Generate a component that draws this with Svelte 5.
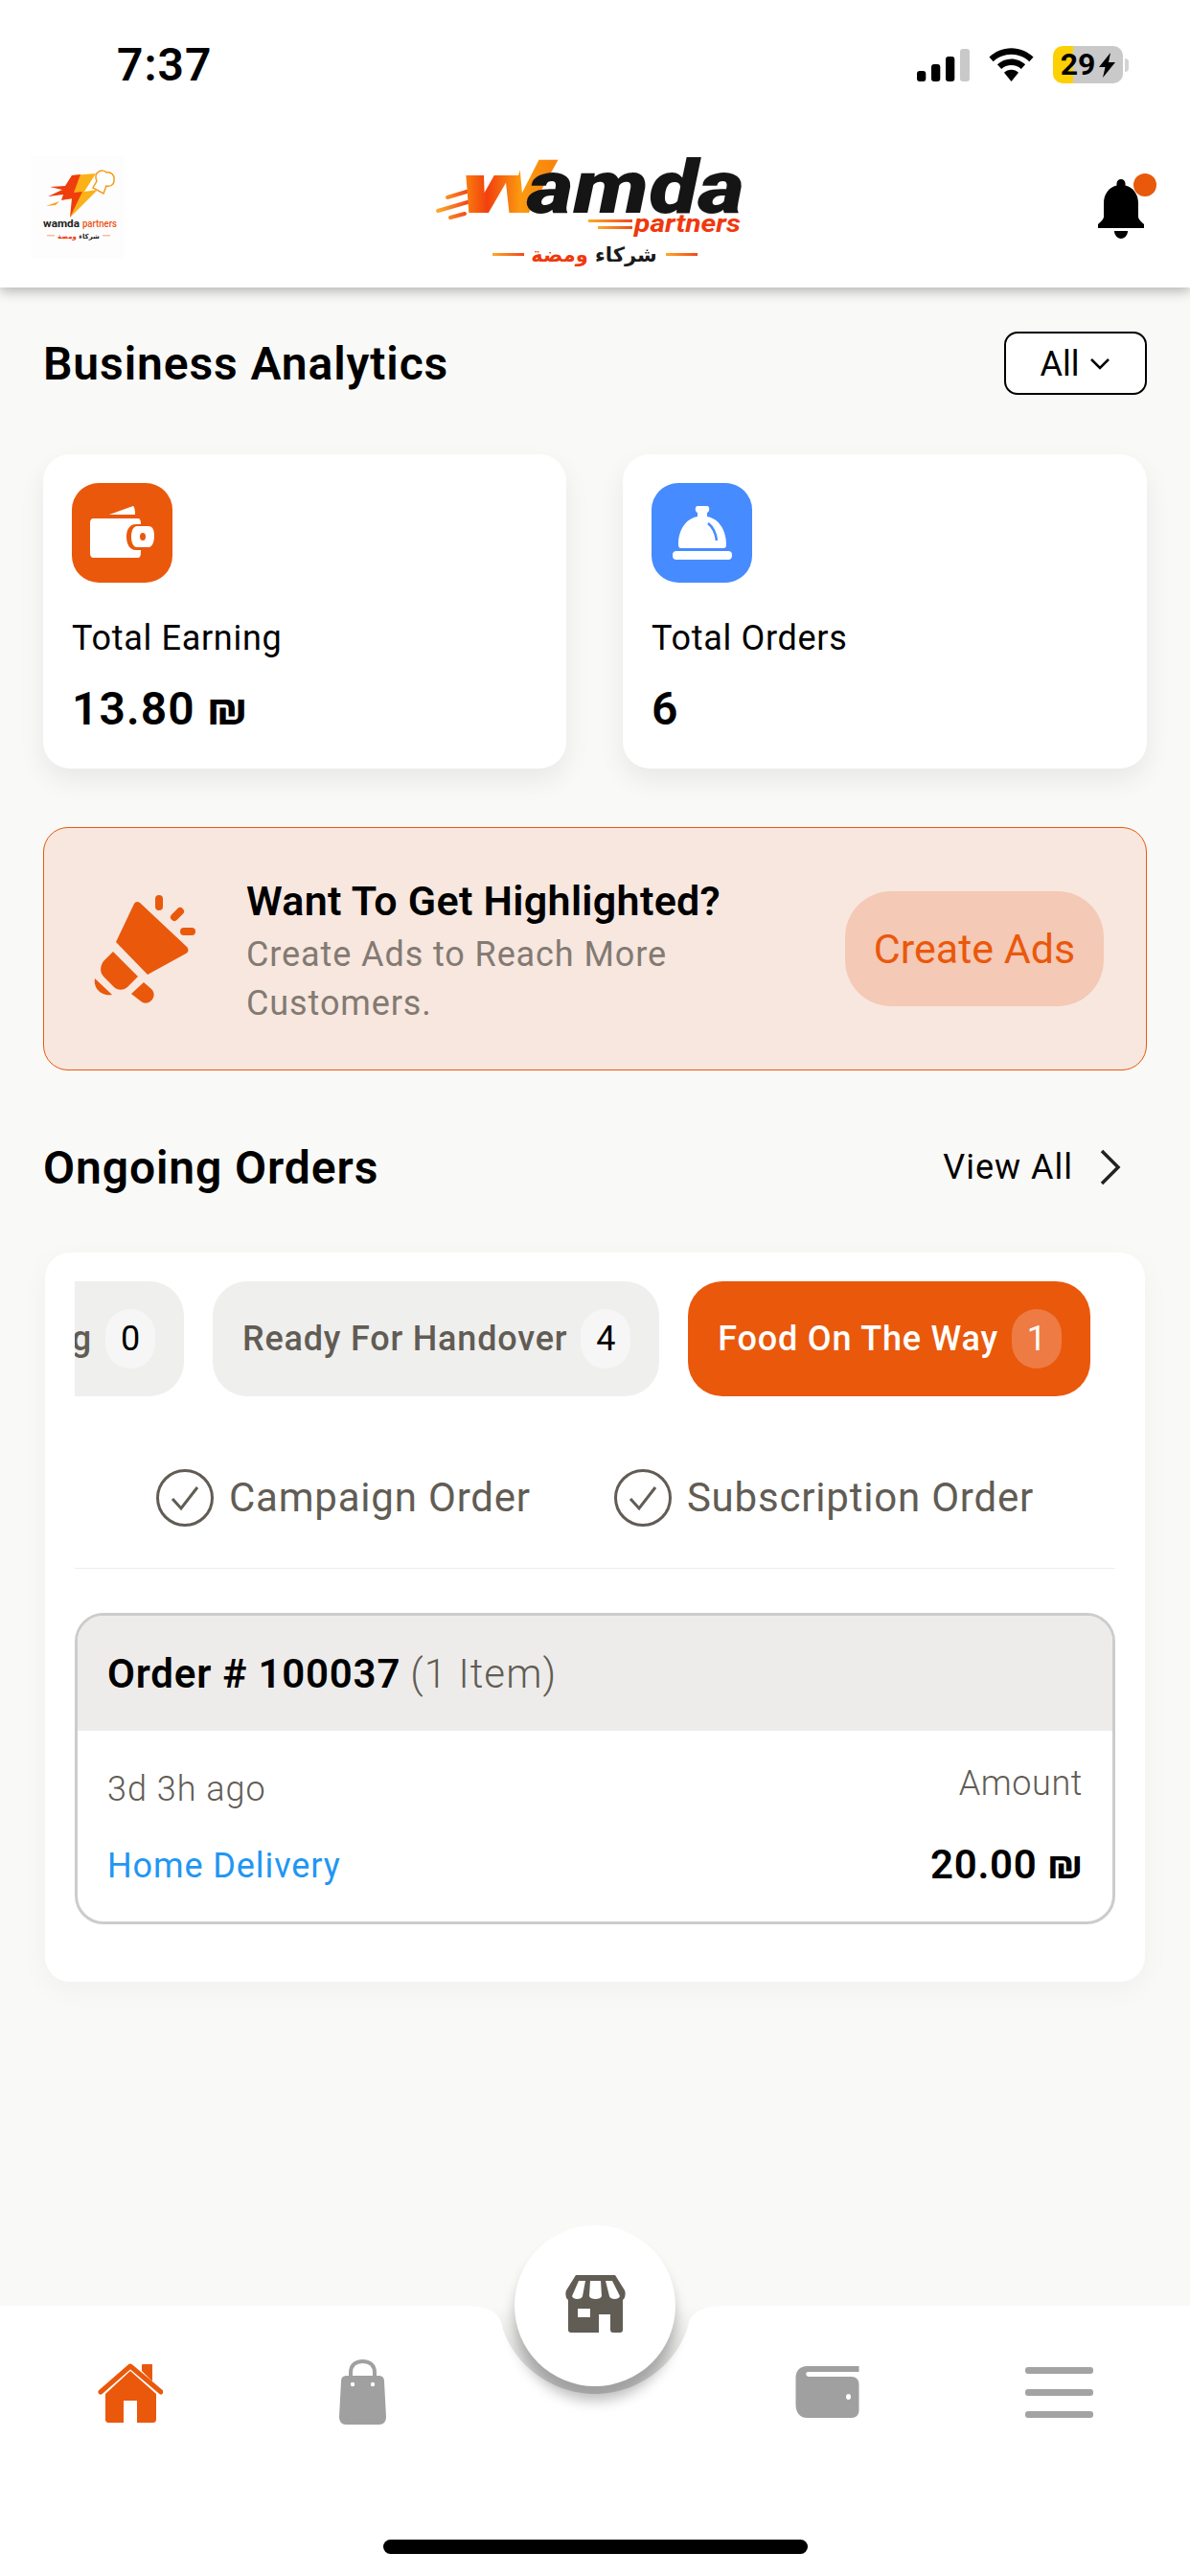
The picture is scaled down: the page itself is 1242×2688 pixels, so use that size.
<script lang="ts">
  const tabs = [
    { label: "Ready For Handover", n: 4, active: false },
    { label: "Food On The Way", n: 1, active: true },
  ];
  const flags = ["Campaign Order", "Subscription Order"];
</script>

{#snippet check()}
  <svg class="check" viewBox="0 0 60 60" aria-hidden="true">
    <circle cx="30" cy="30" r="28.5" fill="none" stroke="#615c54" stroke-width="3" />
    <path d="M17 31l9 10 17-22" fill="none" stroke="#615c54" stroke-width="3" />
  </svg>
{/snippet}

<div class="page">
  <div class="top">
    <div class="status">
      <span class="time">7:37</span>
      <div class="status-icons">
        <svg width="55" height="34" viewBox="0 0 55 34" aria-hidden="true">
          <rect x="0" y="23" width="9.300" height="11" rx="3" />
          <rect x="15" y="16" width="9.300" height="18" rx="3" />
          <rect x="30" y="8" width="9.300" height="26" rx="3" />
          <rect x="45" y="0" width="10" height="34" rx="3" fill="#c9c9c9" />
        </svg>
        <svg width="47" height="36" viewBox="0 0 50 38" aria-hidden="true">
          <path d="M25 0C15.500 0 7 3.800 0.500 10L5 15C10.300 10 17.300 7 25 7s14.700 3 20 8l4.500-5C43 3.800 34.500 0 25 0z" />
          <path d="M25 12c-6 0-11.500 2.400-15.500 6.200l4.500 5c2.900-2.700 6.800-4.300 11-4.300s8.100 1.600 11 4.300l4.500-5C36.500 14.400 31 12 25 12z" />
          <path d="M25 24c-3.100 0-5.900 1.200-8 3.200L25 37l8-9.800c-2.100-2-4.900-3.200-8-3.200z" />
        </svg>
        <div class="battery">
          <div class="battery-body">
            <span class="battery-text">29</span>
            <svg width="17" height="26" viewBox="0 0 17 26" aria-hidden="true">
              <path d="M12 0L0 15h6.500L4 26 17 10H10z" />
            </svg>
          </div>
          <div class="battery-cap"></div>
        </div>
      </div>
    </div>

    <header class="header">
      <svg class="mini-logo" width="98" height="107" viewBox="0 0 98 107" aria-hidden="true">
        <defs>
          <linearGradient id="line" x1="0" y1="0" x2="1" y2="0">
            <stop offset="0" stop-color="#fbaa2a" />
            <stop offset="1" stop-color="#f2481a" />
          </linearGradient>
          <linearGradient id="wgrad" x1="0" y1="0" x2="1" y2="0">
            <stop offset="0" stop-color="#fb9a0e" />
            <stop offset="0.3" stop-color="#f2400f" />
            <stop offset="0.62" stop-color="#fb9a10" />
            <stop offset="1" stop-color="#f8810e" />
          </linearGradient>
        </defs>
        <rect width="98" height="107" fill="#fdfdfd" />
        <path d="M70 17c3-3 8-2 9 0 5-1 9 3 8 8 0 5-4 7-8 6l-3 8-11-6 4-7c-2-4-1-8 1-9z" fill="#fff" stroke="#f59a1c" stroke-width="1.500" />
        <path d="M43 20L68 18 56 37 70 35 41 64 48 44 38 45z" fill="#fbb117" />
        <path d="M43 20L52 19 45 38 54 37 41 64 43 44 32 46 34 40 18 42 33 35 20 32 36 31z" fill="#ef3d0c" />
        <path d="M16 52L30 47 26 51z" fill="#f7a21b" />
        <text x="13" y="74" class="mini-a" textLength="38" lengthAdjust="spacingAndGlyphs">wamda</text>
        <text x="54" y="74" class="mini-b" textLength="36" lengthAdjust="spacingAndGlyphs">partners</text>
        <text x="50" y="86" class="mini-ar" text-anchor="middle" direction="rtl"><tspan fill="#222">شركاء</tspan> <tspan fill="#f0380c">ومضة</tspan></text>
        <rect x="17" y="82" width="8" height="1.500" fill="#f9b9a0" />
        <rect x="75" y="82" width="8" height="1.500" fill="#f9b9a0" />
      </svg>

      <svg class="logo" width="340" height="190" viewBox="450 100 340 190" aria-hidden="true">
        <path d="M467 206l20-6M457 220l31-9M470 227l15-4" fill="none" stroke="url(#line)" stroke-width="4" stroke-linecap="round" />
        <text x="476" y="222" class="logo-w" fill="url(#wgrad)" textLength="100" lengthAdjust="spacingAndGlyphs">W</text>
        <path d="M470 150H552L541 183H470z" fill="#fff" />
        <text x="550" y="222" class="logo-main" textLength="227" lengthAdjust="spacingAndGlyphs">amda</text>
        <rect x="614" y="229" width="46" height="3" fill="url(#line)" />
        <rect x="624" y="236" width="36" height="3" fill="url(#line)" />
        <text x="662" y="242" class="logo-sub" textLength="111" lengthAdjust="spacingAndGlyphs">partners</text>
        <text x="620" y="273" class="logo-ar" text-anchor="middle" direction="rtl"><tspan fill="#1a1a1a">شركاء</tspan> <tspan fill="#f0380c">ومضة</tspan></text>
        <rect x="514" y="264" width="33" height="3" fill="url(#line)" />
        <rect x="695" y="264" width="33" height="3" fill="url(#line)" />
      </svg>

      <div class="bell">
        <svg width="50" height="62" viewBox="0 0 50 62" aria-hidden="true">
          <path d="M25 0c2.500 0 4.500 2 4.500 4.500v2C38 8.500 43 16 43 25v14c0 3 3 5 6 8v4H1v-4c3-3 6-5 6-8V25C7 16 12 8.500 20.500 6.500v-2C20.500 2 22.500 0 25 0z" />
          <path d="M18 54h14c0 4-3 8-7 8s-7-4-7-8z" />
        </svg>
        <span class="bell-dot"></span>
      </div>
    </header>
  </div>

  <main class="main">
    <div class="title-row">
      <h2>Business Analytics</h2>
      <button class="filter">
        All
        <svg width="24" height="14" viewBox="0 0 24 14" aria-hidden="true"><path d="M3 2l9 9 9-9" fill="none" stroke="#000" stroke-width="2.500" /></svg>
      </button>
    </div>

    <div class="stats">
      <div class="stat">
        <div class="stat-icon orange">
          <svg width="68" height="56" viewBox="0 0 68 56" aria-hidden="true">
            <path d="M20 9L45 0c1.500 1 2 5 2 9z" fill="#fff" />
            <path d="M4 13h46c2 0 3 2 3 5v1h-5c-7 0-10 6-10 13s3 14 10 14h5v2c0 4-1 6-3 6H4c-3 0-4-2-4-5V18c0-3 1-5 4-5z" fill="#fff" />
            <path d="M49 21h12c4 0 6 4 6 10s-2 12-6 12H49c-4 0-6-5-6-11s2-11 6-11z" fill="#fff" />
            <ellipse cx="55" cy="32" rx="3" ry="4" fill="#ea580c" />
          </svg>
        </div>
        <div class="stat-label">Total Earning</div>
        <div class="stat-value">13.80 ₪</div>
      </div>
      <div class="stat">
        <div class="stat-icon blue">
          <svg width="62" height="56" viewBox="0 0 62 56" aria-hidden="true">
            <path d="M26 0h10c3 0 3 6 0 7v4c12 2 20 14 20 29 0 3-1 4-3 4H9c-2 0-3-1-3-4 0-15 8-27 20-29V7c-3-1-3-7 0-7z" fill="#fff" />
            <path d="M37 18c5 4 8 10 9 18" fill="none" stroke="#468bff" stroke-width="2.500" />
            <rect x="0" y="47" width="62" height="9" rx="4" fill="#fff" />
          </svg>
        </div>
        <div class="stat-label">Total Orders</div>
        <div class="stat-value">6</div>
      </div>
    </div>

    <section class="promo">
      <svg class="promo-icon" width="150" height="170" viewBox="0 5 150 170" aria-hidden="true">
        <path d="M60 43c1-2 4-3 6-1l49 46c2 2 2 6-1 7L74 117 41 83z" fill="#ea580c" />
        <path d="M38 93L64 119 53 130c-3 3-10 4-14 0L29 120c-5-5-5-11-1-17z" fill="#ea580c" />
        <path d="M19 121L37 138C27 140 17 132 19 121zM70 125L78 132c4 4 3 9 0 12-4 4-9 3-12 0L57 137z" fill="#ea580c" />
        <path d="M86 38V46M102 57L108 51M112 72H120" fill="none" stroke="#ea580c" stroke-width="8" stroke-linecap="round" />
      </svg>
      <div class="promo-text">
        <div class="promo-title">Want To Get Highlighted?</div>
        <div class="promo-sub">Create Ads to Reach More Customers.</div>
      </div>
      <button class="promo-btn">Create Ads</button>
    </section>

    <div class="title-row orders-title">
      <h2>Ongoing Orders</h2>
      <div class="view-all">
        View All
        <svg width="24" height="38" viewBox="0 0 24 38" aria-hidden="true"><path d="M4 2l17 17L4 36" fill="none" stroke="#222" stroke-width="3.500" /></svg>
      </div>
    </div>

    <section class="orders">
      <div class="tabs">
        <div class="tab cut"><span class="tab-text">g</span><span class="count">0</span></div>
        {#each tabs as t}
          <div class="tab" class:active={t.active}>
            <span class="tab-text">{t.label}</span><span class="count">{t.n}</span>
          </div>
        {/each}
      </div>

      <div class="flags">
        {#each flags as f}
          <div class="flag">{@render check()}<span>{f}</span></div>
        {/each}
      </div>

      <div class="order">
        <div class="order-head"><b>Order # 100037</b> <span>(1 Item)</span></div>
        <div class="order-body">
          <div class="order-col">
            <span class="ago">3d 3h ago</span>
            <span class="delivery">Home Delivery</span>
          </div>
          <div class="order-col right">
            <span class="amount-label">Amount</span>
            <span class="amount">20.00 ₪</span>
          </div>
        </div>
      </div>
    </section>
  </main>

  <nav class="nav">
    <svg class="notch" width="320" height="110" viewBox="0 0 320 110" aria-hidden="true">
      <defs>
        <linearGradient id="notchfill" x1="0" y1="0" x2="0" y2="1">
          <stop offset="0" stop-color="#f9f9f7" />
          <stop offset="0.5" stop-color="#e6e6e5" />
          <stop offset="1" stop-color="#d4d4d4" />
        </linearGradient>
      </defs>
      <path d="M22 0C45 0 58 5 62 17C70 55 110 92 160 92S250 55 258 17C262 5 275 0 298 0z" fill="url(#notchfill)" />
    </svg>
    <div class="store">
      <svg width="63" height="60" viewBox="0 0 63 60" aria-hidden="true">
        <path d="M11 0H52L62 16c1 2 1 8-2 10V57c0 2-1 3-3 3H50c-2 0-3-1-3-3V41H35V60H6c-2 0-3-1-3-3V26C0 24 0 18 1 16z" fill="#615c54" />
        <path d="M14 6h7l-3 16c-1 4-10 4-11 0zM26 6h11l1 16c-1 4-12 4-13 0zM42 6h7l8 16c-1 4-10 4-11 0z" fill="#fff" />
        <rect x="13" y="35" width="13" height="9" fill="#fff" />
      </svg>
    </div>
    <div class="nav-items">
      <svg width="68" height="64" viewBox="0 0 68 64" aria-hidden="true">
        <path d="M3 32L34 5 66 32" fill="none" stroke="#ea580c" stroke-width="5" stroke-linecap="round" stroke-linejoin="round" />
        <path d="M46 10V4c0-1 1-1 1-1h9c1 0 1 0 1 1v17z" fill="#ea580c" />
        <path d="M34 10L61 34V60c0 3-1 4-4 4H41V41H27V64H12c-3 0-4-1-4-4V34z" fill="#ea580c" />
      </svg>
      <svg width="49" height="68" viewBox="0 0 49 68" aria-hidden="true">
        <path d="M12 19V14C12 6 17 2 24.500 2S37 6 37 14V19" fill="none" stroke="#a0a0a0" stroke-width="4" />
        <path d="M8 17h33c4 0 6 2 6 6l2 37c0 5-3 8-7 8H7c-4 0-7-3-7-8l2-37c0-4 2-6 6-6z" fill="#a0a0a0" />
        <circle cx="14" cy="26" r="2.200" fill="#fff" />
        <circle cx="35" cy="26" r="2.200" fill="#fff" />
      </svg>
      <span></span>
      <svg width="67" height="54" viewBox="0 0 66 54" aria-hidden="true">
        <path d="M12 0h54v6H13c-3 0-3 4 0 5h45c5 0 8 3 8 8v27c0 5-3 8-8 8H12C4 54 0 48 0 40V12C0 5 4 0 12 0z" fill="#a0a0a0" />
        <ellipse cx="55" cy="32" rx="2.500" ry="3" fill="#fff" />
      </svg>
      <div class="burger"><span></span><span></span><span></span></div>
    </div>
    <div class="home-bar"></div>
  </nav>
</div>

<style>
  :global(body) {
    margin: 0;
    background: #f9f9f7;
  }

  .page {
    width: 1242px;
    height: 2688px;
    display: flex;
    flex-direction: column;
    background: #f9f9f7;
    font-family: Roboto, "Noto Sans", sans-serif;
    color: #000;
    overflow: hidden;
  }

  .top {
    height: 300px;
    box-sizing: border-box;
    background: #fff;
    box-shadow: 0 4px 12px rgba(0, 0, 0, 0.28);
    position: relative;
    z-index: 1;
  }

  .status {
    height: 140px;
    display: flex;
    justify-content: space-between;
    align-items: flex-start;
    padding: 40px 64px 0 122px;
    box-sizing: border-box;
  }

  .time {
    font-size: 48px;
    font-weight: 600;
    line-height: 56px;
    letter-spacing: 1px;
  }

  .status-icons {
    display: flex;
    align-items: center;
    gap: 20px;
    padding-top: 8px;
  }

  .battery {
    display: flex;
    align-items: center;
    gap: 2px;
  }

  .battery-body {
    width: 73px;
    height: 39px;
    border-radius: 10px;
    background: linear-gradient(90deg, #fdd003 21px, #c9c9c9 21px);
    display: flex;
    align-items: center;
    justify-content: center;
    gap: 4px;
  }

  .battery-text {
    font-size: 32px;
    font-weight: 700;
    line-height: 39px;
  }

  .battery-cap {
    width: 4px;
    height: 14px;
    background: #d4d4d4;
    border-radius: 0 4px 4px 0;
  }

  .header {
    height: 160px;
    display: flex;
    justify-content: space-between;
    align-items: flex-start;
    padding: 0 47px 0 32px;
    position: relative;
  }

  .mini-logo {
    margin-top: 23px;
  }

  .logo {
    position: absolute;
    left: 450px;
    top: -40px;
  }

  .logo-w {
    font: italic 900 78px Roboto, sans-serif;
  }

  .logo-main {
    font: italic 900 78px Roboto, sans-serif;
    fill: #151515;
  }

  .logo-sub {
    font: italic 700 25px Roboto, sans-serif;
    fill: #f0380c;
  }

  .logo-ar {
    font: 700 21px "DejaVu Sans", sans-serif;
  }

  .mini-a {
    font: 700 11px Roboto, sans-serif;
    fill: #222;
  }

  .mini-b {
    font: 500 11px Roboto, sans-serif;
    fill: #f0500f;
  }

  .mini-ar {
    font: 700 7px "DejaVu Sans", sans-serif;
  }

  .bell {
    position: relative;
    margin-top: 47px;
  }

  .bell-dot {
    position: absolute;
    right: -12px;
    top: -6px;
    width: 24px;
    height: 24px;
    border-radius: 50%;
    background: #e8590c;
  }

  .main {
    flex: 1;
    padding: 0 45px;
  }

  .title-row {
    display: flex;
    justify-content: space-between;
    align-items: center;
  }

  .title-row:first-child {
    height: 66px;
    margin-top: 46px;
  }

  h2 {
    margin: 0;
    font-size: 48px;
    font-weight: 600;
    letter-spacing: 0.9px;
  }

  .filter {
    width: 149px;
    height: 66px;
    box-sizing: border-box;
    border: 2px solid #000;
    border-radius: 14px;
    background: #fff;
    display: flex;
    align-items: center;
    justify-content: center;
    gap: 9px;
    padding: 2px 0 0;
    font: 400 36px Roboto, sans-serif;
    color: #000;
  }

  .stats {
    display: grid;
    grid-template-columns: 546px 547px;
    gap: 59px;
    margin-top: 62px;
  }

  .stat {
    height: 328px;
    box-sizing: border-box;
    background: #fff;
    border-radius: 28px;
    padding: 30px;
    box-shadow: 0 12px 28px rgba(0, 0, 0, 0.07);
  }

  .stat-icon {
    width: 105px;
    height: 104px;
    border-radius: 28px;
    display: flex;
    align-items: center;
    justify-content: center;
  }

  .orange {
    background: #ea580c;
  }

  .blue {
    background: #468bff;
  }

  .stat-label {
    margin-top: 37px;
    font-size: 36px;
    line-height: 42px;
    letter-spacing: 0.7px;
  }

  .stat-value {
    margin-top: 25px;
    font-size: 48px;
    line-height: 56px;
    font-weight: 600;
    letter-spacing: 1.1px;
  }

  .promo {
    height: 254px;
    margin-top: 61px;
    box-sizing: border-box;
    border: 1px solid #ea580c;
    border-radius: 26px;
    background: #f7e7df;
    display: flex;
    align-items: center;
    padding: 0 44px 0 34px;
  }

  .promo-icon {
    flex: none;
  }

  .promo-text {
    margin-left: 27px;
    flex: 1;
    padding-top: 6px;
  }

  .promo-title {
    font-size: 43px;
    font-weight: 600;
    line-height: 52px;
    letter-spacing: 0.3px;
  }

  .promo-sub {
    width: 470px;
    margin-top: 5px;
    font-size: 36px;
    line-height: 51px;
    color: #837a72;
    letter-spacing: 0.9px;
  }

  .promo-btn {
    flex: none;
    width: 270px;
    height: 120px;
    border: 0;
    border-radius: 48px;
    background: #f4c9b5;
    color: #ea580c;
    font: 400 43px Roboto, sans-serif;
  }

  .orders-title {
    margin-top: 66px;
    height: 70px;
  }

  .view-all {
    display: flex;
    align-items: center;
    gap: 26px;
    font-size: 36px;
    letter-spacing: 1px;
    padding-right: 27px;
  }

  .orders {
    margin: 54px 2px 0;
    height: 761px;
    box-sizing: border-box;
    background: #fff;
    border-radius: 26px;
    padding: 30px 31px;
    box-shadow: 0 8px 30px rgba(0, 0, 0, 0.04);
  }

  .tabs {
    display: flex;
    gap: 30px;
  }

  .tab {
    height: 120px;
    box-sizing: border-box;
    padding: 0 30px 0 31px;
    border-radius: 36px;
    background: #efefee;
    display: flex;
    align-items: center;
    gap: 14px;
    color: #615c54;
    font-size: 36px;
    font-weight: 500;
    letter-spacing: 0.8px;
    white-space: nowrap;
  }

  .tab.cut {
    width: 114px;
    padding: 0 30px 0 0;
    border-radius: 0 36px 36px 0;
    justify-content: flex-end;
    overflow: hidden;
  }

  .tab-text,
  .count {
    flex: none;
  }

  .count {
    width: 52px;
    height: 62px;
    border-radius: 26px;
    background: #f6f6f6;
    color: #000;
    font-weight: 400;
    display: flex;
    align-items: center;
    justify-content: center;
    letter-spacing: 0;
  }

  .tab.active {
    background: #ea580c;
    color: #fff;
  }

  .tab.active .count {
    background: #ee7b43;
    color: #fff;
  }

  .flags {
    display: flex;
    justify-content: center;
    gap: 87px;
    margin-top: 76px;
    height: 103px;
    border-bottom: 1px solid #eeeeee;
    box-sizing: content-box;
  }

  .flag {
    display: flex;
    align-items: flex-start;
    gap: 16px;
    font-size: 42px;
    line-height: 60px;
    color: #615c54;
    letter-spacing: 0.8px;
  }

  .check {
    width: 60px;
    height: 60px;
  }

  .order {
    margin-top: 46px;
    height: 325px;
    box-sizing: border-box;
    border: 3px solid #cccccc;
    border-radius: 30px;
    overflow: hidden;
  }

  .order-head {
    height: 120px;
    background: #edecea;
    display: flex;
    align-items: center;
    gap: 10px;
    padding: 0 31px;
    font-size: 42px;
  }

  .order-head b {
    font-weight: 600;
    letter-spacing: 0.8px;
  }

  .order-head span {
    color: #615c54;
    font-weight: 300;
    letter-spacing: 1.1px;
  }

  .order-body {
    display: flex;
    justify-content: space-between;
    padding: 0 31px;
  }

  .order-col {
    display: flex;
    flex-direction: column;
  }

  .order-col.right {
    align-items: flex-end;
  }

  .ago {
    margin-top: 40px;
    font-size: 36px;
    line-height: 42px;
    font-weight: 300;
    color: #615c54;
    letter-spacing: 1px;
  }

  .delivery {
    margin-top: 38px;
    font-size: 36px;
    line-height: 42px;
    color: #2196f3;
    letter-spacing: 0.9px;
  }

  .amount-label {
    margin-top: 34px;
    font-size: 36px;
    line-height: 42px;
    font-weight: 300;
    color: #615c54;
    letter-spacing: 0.6px;
  }

  .amount {
    margin-top: 40px;
    font-size: 42px;
    line-height: 48px;
    font-weight: 600;
    letter-spacing: 0.7px;
  }

  .nav {
    height: 282px;
    background: #fff;
    position: relative;
    flex: none;
  }

  .notch {
    position: absolute;
    left: 461px;
    top: 0;
  }

  .store {
    position: absolute;
    left: 537px;
    top: -84px;
    width: 168px;
    height: 168px;
    box-sizing: border-box;
    padding-bottom: 4px;
    border-radius: 50%;
    background: #fff;
    box-shadow: 0 15px 14px rgba(0, 0, 0, 0.26);
    display: flex;
    align-items: center;
    justify-content: center;
  }

  .nav-items {
    display: grid;
    grid-template-columns: repeat(5, 242.4px);
    justify-items: center;
    align-items: center;
    height: 68px;
    padding: 56px 15px 0;
    position: relative;
  }

  .burger {
    width: 71px;
    display: flex;
    flex-direction: column;
    gap: 16px;
  }

  .burger span {
    height: 7px;
    border-radius: 3px;
    background: #a3a3a3;
  }

  .home-bar {
    position: absolute;
    left: 400px;
    bottom: 23px;
    width: 443px;
    height: 15px;
    border-radius: 8px;
    background: #000;
  }
</style>
